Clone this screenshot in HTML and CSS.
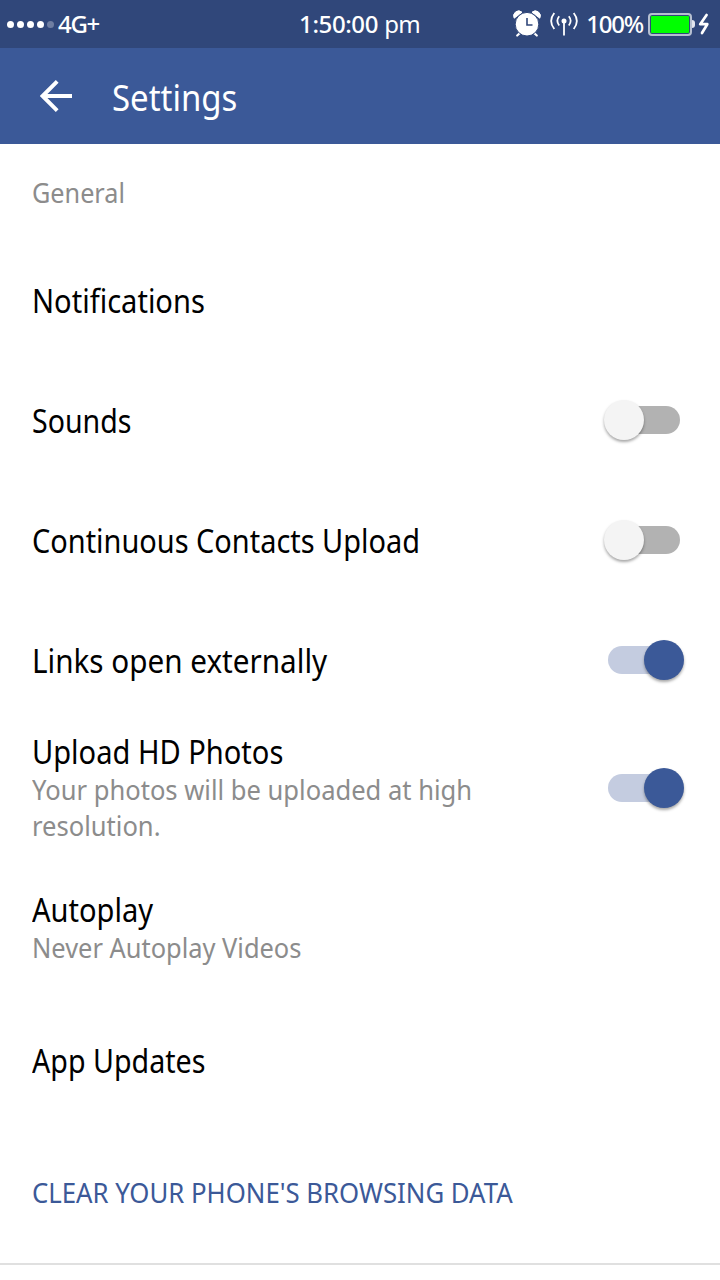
FILE: index.html
```
<!DOCTYPE html>
<html lang="en">
<head>
    <meta charset="UTF-8">
    <meta name="viewport" content="width=device-width, initial-scale=1.0">
    <title>Settings</title>
    <link rel="stylesheet" href="styles.css">
</head>
<body>
    <!-- Status bar -->
    <div class="status-bar">
        <div class="status-left">
            <span class="dot"></span>
            <span class="dot"></span>
            <span class="dot"></span>
            <span class="dot"></span>
            <span class="dot dim"></span>
            <span class="network">4G+</span>
        </div>
        <div class="clock"><span class="time">1:50:00</span> <span class="ampm">pm</span></div>
        <div class="status-right">
            <svg class="alarm" width="28" height="28" viewBox="0 0 28 28">
                <path d="M1.2 8.2A5 5 0 0 1 9 2.2ZM26.8 8.2A5 5 0 0 0 19 2.2Z" fill="#fff" stroke="#fff" stroke-linejoin="round"/>
                <path d="M7 23L4.2 25.5M21 23L23.8 25.5" stroke="#fff" stroke-width="2.2" stroke-linecap="round"/>
                <circle cx="14" cy="14.2" r="11.8" fill="#fff" stroke="#30477a" stroke-width="1"/>
                <path d="M14 8V15H19.5" fill="none" stroke="#30477a" stroke-width="1.6"/>
            </svg>
            <svg class="antenna" width="28" height="26" viewBox="0 0 28 26">
                <circle cx="14" cy="10" r="2.5" fill="#fff"/>
                <path d="M14 10V24.5" stroke="#fff" stroke-width="1.8"/>
                <path d="M9.2 5.2Q5.5 9.8 9.2 14.5M4.3 2Q-2 10 4.3 18M18.8 5.2Q22.5 9.8 18.8 14.5M23.7 2Q30 10 23.7 18" fill="none" stroke="#fff" stroke-width="1.8"/>
            </svg>
            <span class="percent">100%</span>
            <span class="battery"></span>
            <span class="battery-tip"></span>
            <svg class="bolt" width="12" height="22" viewBox="0 0 12 22">
                <path d="M8.6 2L2.2 11.2H9.3L4 20" fill="none" stroke="#fff" stroke-width="2.7" stroke-linejoin="round" stroke-linecap="round"/>
            </svg>
        </div>
    </div>

    <!-- Header -->
    <div class="header">
        <svg class="back" width="32" height="32" viewBox="0 0 32 32">
            <path d="M32 16H4M17.2 1.4L2.6 16L17.2 30.6" fill="none" stroke="#fff" stroke-width="3.9"/>
        </svg>
        <h1>Settings</h1>
    </div>

    <!-- Settings list -->
    <div class="list">
        <div class="section-title">General</div>
        <div class="row">
            <div class="label notifications">Notifications</div>
        </div>
        <div class="row">
            <div class="label sounds">Sounds</div>
            <div class="switch"></div>
        </div>
        <div class="row">
            <div class="label contacts">Continuous Contacts Upload</div>
            <div class="switch"></div>
        </div>
        <div class="row">
            <div class="label links">Links open externally</div>
            <div class="switch on"></div>
        </div>
        <div class="row upload-row">
            <div class="text">
                <div class="label">Upload HD Photos</div>
                <div class="desc upload-desc">Your photos will be uploaded at high<br>resolution.</div>
            </div>
            <div class="switch on"></div>
        </div>
        <div class="row autoplay-row">
            <div class="text">
                <div class="label">Autoplay</div>
                <div class="desc">Never Autoplay Videos</div>
            </div>
        </div>
        <div class="row">
            <div class="label updates">App Updates</div>
        </div>
        <div class="row clear-row">
            <div class="clear">CLEAR YOUR PHONE'S BROWSING DATA</div>
        </div>
    </div>
</body>
</html>
```
FILE: styles.css
```
* {
    box-sizing: border-box;
}

body {
    margin: 0;
    background: #fff;
    color: #000;
    font-family: "Noto Sans", sans-serif;
    white-space: nowrap;
    overflow: hidden;
}

.status-bar {
    display: grid;
    grid-template-columns: 1fr auto 1fr;
    align-items: center;
    height: 48px;
    padding: 0 10px 0 7px;
    background: #30477a;
    color: #fff;
    font-size: 24px;
    line-height: 48px;
}

.status-left, .status-right {
    display: flex;
    align-items: center;
}

.status-right {
    justify-content: flex-end;
}

.dot {
    width: 7px;
    height: 7px;
    margin-right: 3px;
    border-radius: 50%;
    background: #fff;
}

.dim {
    opacity: 0.3;
}

.network {
    margin-left: 1px;
    font-weight: 500;
    letter-spacing: -1.3px;
}

.clock {
    padding-left: 2px;
}

.time {
    font-weight: 500;
    letter-spacing: -0.4px;
}

.ampm {
    letter-spacing: -0.8px;
}

.antenna {
    margin: 0 8px 0 9px;
}

.percent {
    font-weight: 500;
    letter-spacing: -1.2px;
}

.battery {
    width: 44px;
    height: 23px;
    margin-left: 5px;
    border: 2px solid #b5bfd0;
    border-radius: 4px;
    background: #00ff00;
    box-shadow: inset 0 0 0 1px #30477a;
}

.battery-tip {
    width: 3px;
    height: 8px;
    border-radius: 0 3px 3px 0;
    background: #e2e6ee;
}

.bolt {
    margin-left: 3px;
}

.header {
    display: flex;
    align-items: center;
    height: 96px;
    padding-left: 40px;
    background: #3b5998;
    color: #fff;
}

h1 {
    margin: 2px 0 0 40px;
    font-size: 36px;
    font-weight: 400;
    transform: scaleX(0.915);
    transform-origin: left;
}

/* condensed lettering */
.section-title, .label, .desc, .clear {
    transform: scaleX(0.908);
    transform-origin: 0 50%;
}

.section-title {
    height: 96px;
    margin-left: 32px;
    color: #8c8c8c;
    font-size: 28px;
    line-height: 97px;
    transform: scaleX(0.9);
}

.row {
    display: flex;
    align-items: center;
    justify-content: space-between;
    height: 120px;
    padding: 0 36px 0 32px;
}

.label {
    padding-top: 1px;
    font-size: 32px;
    line-height: 38px;
}

.sounds {
    transform: scaleX(0.892);
}

.contacts {
    transform: scaleX(0.904);
}

.links {
    transform: scaleX(0.927);
}

.updates {
    transform: scaleX(0.895);
}

.desc {
    color: #8c8c8c;
    font-size: 28px;
    line-height: 36px;
}

.upload-desc {
    transform: scaleX(0.913);
}

.upload-row {
    height: 135px;
}

.autoplay-row {
    height: 145px;
}

.clear-row {
    height: 145px;
    border-bottom: 2px solid #e0e0e0;
}

.clear {
    color: #3b5998;
    font-size: 28px;
    transform: scaleX(0.92);
}

.switch {
    display: flex;
    align-items: center;
    width: 72px;
    height: 28px;
    margin-right: 4px;
    border-radius: 14px;
    background: #b2b2b2;
}

.switch::before {
    content: "";
    flex: none;
    width: 40px;
    height: 40px;
    margin-left: -4px;
    border-radius: 50%;
    background: #f4f4f4;
    box-shadow: 0 2px 3px rgba(0, 0, 0, 0.35);
}

.switch.on {
    background: #c4cce0;
}

.switch.on::before {
    margin-left: 36px;
    background: #3b5998;
}
```
